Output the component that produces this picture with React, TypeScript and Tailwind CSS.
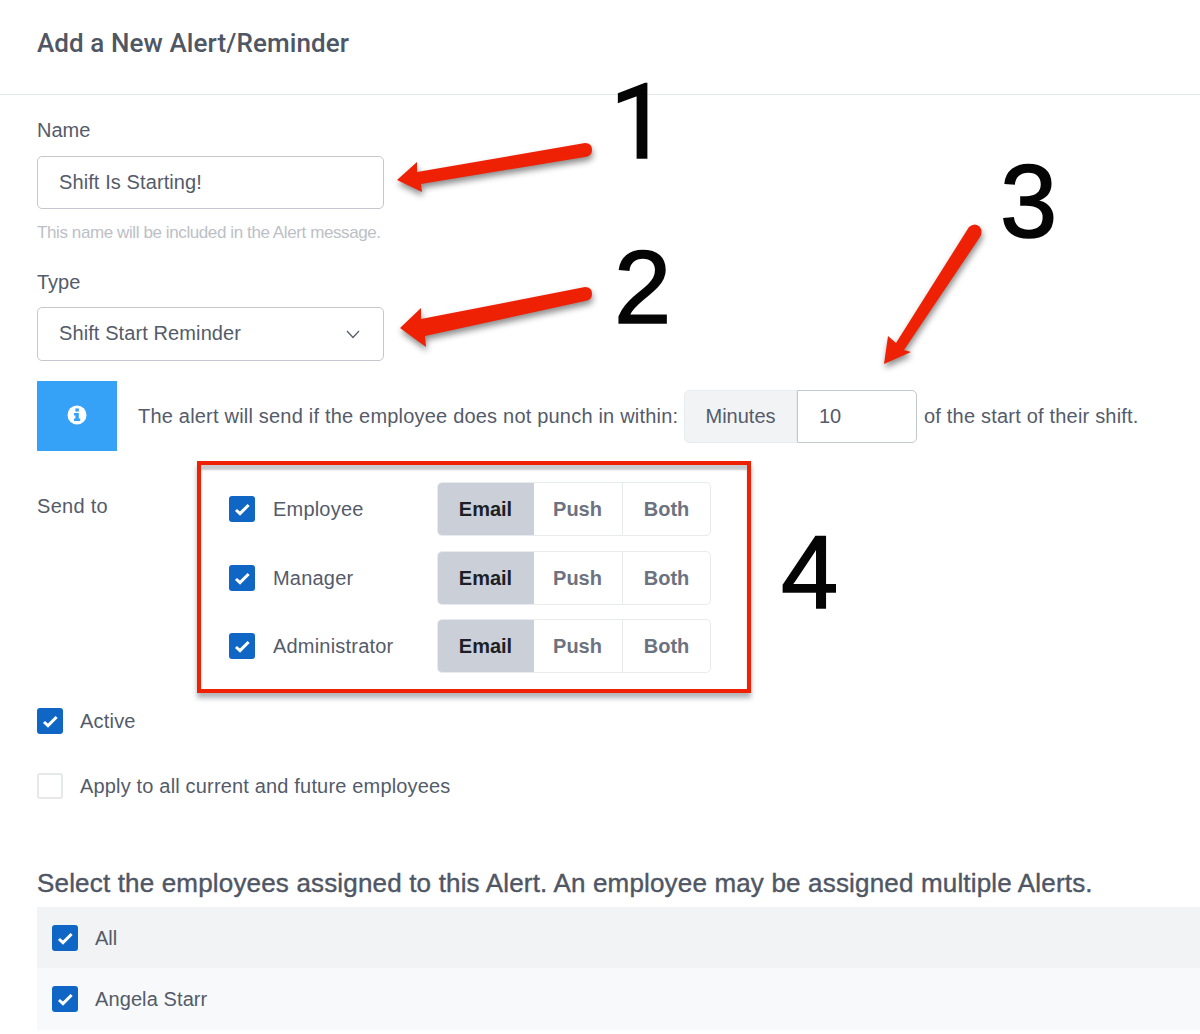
const sans = '"Liberation Sans", Arial, sans-serif';

function Check({ on = true }: { on?: boolean }) {
  if (!on) {
    return <span className="block h-[26px] w-[26px] shrink-0 rounded-[3px] border-2 border-[#e6e8eb] bg-white" />;
  }
  return (
    <span className="block h-[26px] w-[26px] shrink-0 rounded-[3px] bg-[#0f66c4]">
      <svg width="26" height="26" viewBox="0 0 26 26">
        <path d="M7 14 L11 17.6 L19.6 9" fill="none" stroke="#fff" strokeWidth="3" />
      </svg>
    </span>
  );
}

function Segments() {
  return (
    <div className="flex h-[54px] w-[274px] overflow-hidden rounded-[5px] border border-[#e8ebee] text-[20px] font-bold">
      <div className="-m-px flex w-[97px] items-center justify-center bg-[#cbcfd8] text-[#1c1f26]">Email</div>
      <div className="flex w-[90px] items-center justify-center border-r border-[#e8ebee] text-[#6d7280]">Push</div>
      <div className="flex flex-1 items-center justify-center text-[#6d7280]">Both</div>
    </div>
  );
}

function SendRow({ label, className }: { label: string; className?: string }) {
  return (
    <div className={`flex items-center ${className ?? ''}`}>
      <Check />
      <span className="ml-[18px] w-[164px] text-[20px] tracking-[0.2px] text-[#545b6a]">{label}</span>
      <Segments />
    </div>
  );
}

function Annotations() {
  const digit = 'absolute text-[103px] leading-[118px] text-[#050505] [-webkit-text-stroke:1.5px_#050505]';
  return (
    <>
      <svg className="pointer-events-none absolute left-0 top-0 drop-shadow-[1px_4px_3px_rgba(0,0,0,0.45)]" width="1200" height="1034">
        <path d="M585 143 Q592 143 592 150 Q592 156 585 157 L421 184 L422 192 L397 180 L417 162 L417 172 Z" fill="#ee2105" />
        <path d="M585 287 Q592 287 592 294 Q592 300 585 301 L425 336 L426 347 L400 328 L421 308 L421 319 Z" fill="#ee2105" />
        <path d="M969 227 Q975 222 980 227 Q983 232 980 237 L904 350 L911 352 L884 364 L888 336 L896 343 Z" fill="#ee2105" />
      </svg>
      <span className={`${digit} left-[610px] top-[64px]`} style={{ fontFamily: 'Roboto, sans-serif' }}>1</span>
      <span className={`${digit} left-[614px] top-[229px]`}>2</span>
      <span className={`${digit} left-[1000px] top-[143px]`}>3</span>
      <span className={`${digit} left-[781px] top-[514px]`}>4</span>
    </>
  );
}

export default function App() {
  return (
    <div className="relative h-[1034px] w-[1200px] overflow-hidden bg-white text-[#545b6a]" style={{ fontFamily: sans }}>
      <div className="flex h-[95px] items-center border-b border-[#e6e9ec] pb-[7px] pl-[37px]">
        <h1 className="text-[26px] font-medium tracking-[0.09px] text-[#4f5664]" style={{ fontFamily: 'Roboto, sans-serif' }}>
          Add a New Alert/Reminder
        </h1>
      </div>

      <div className="pl-[37px]">
        <label className="mt-[23px] block text-[20px] leading-[24px]">Name</label>
        <div className="mt-[14px] flex h-[53px] w-[347px] items-center rounded-[5px] border border-[#c4c7ce] pb-[2px] pl-[21px] text-[20px] tracking-[0.1px]">
          Shift Is Starting!
        </div>
        <p className="mt-[14px] text-[17px] leading-[20px] tracking-[-0.4px] text-[#bcc0c6]">This name will be included in the Alert message.</p>

        <label className="mt-[27px] block text-[20px] leading-[24px]">Type</label>
        <div className="mt-[13px] flex h-[54px] w-[347px] items-center justify-between rounded-[5px] border border-[#c4c7ce] pl-[21px] pr-[23px] text-[20px] tracking-[0.1px]">
          <span className="pb-[2px]">Shift Start Reminder</span>
          <svg width="14" height="9" viewBox="0 0 14 9">
            <path d="M1 1 L7 7.5 L13 1" fill="none" stroke="#545b6a" strokeWidth="1.2" />
          </svg>
        </div>

        <div className="mt-[20px] flex items-start">
          <div className="flex h-[70px] w-[80px] shrink-0 items-center justify-center bg-[#36a2f7] pb-[2px]">
            <svg width="20" height="20" viewBox="0 0 20 20">
              <circle cx="10" cy="10" r="9.5" fill="#fff" />
              <rect x="8.4" y="3.4" width="3.4" height="3.2" fill="#36a2f7" />
              <path d="M7 8 H11.8 V13.6 H13.2 V16 H7 V13.6 H8.4 V10.4 H7 Z" fill="#36a2f7" />
            </svg>
          </div>
          <div className="mt-[9px] flex items-center">
            <span className="ml-[21px] w-[546px] pb-[2px] text-[20px] tracking-[0.2px]">The alert will send if the employee does not punch in within:</span>
            <div className="flex h-[53px] w-[113px] items-center justify-center rounded-l-[5px] border border-[#e9ecef] bg-[#f1f3f5] pb-[2px] text-[20px]">
              Minutes
            </div>
            <div className="flex h-[53px] w-[120px] items-center rounded-r-[5px] border border-[#c4c7ce] pb-[2px] pl-[21px] text-[20px]">10</div>
            <span className="ml-[7px] pb-[2px] text-[20px] tracking-[0.2px]">of the start of their shift.</span>
          </div>
        </div>

        <div className="mt-[10px] flex items-start">
          <span className="mt-[33px] w-[160px] text-[20px] leading-[24px] tracking-[0.3px]">Send to</span>
          <div className="h-[232px] w-[554px] border-[4px] border-[#ee2105] pl-[28px] pt-[17px] shadow-[0_5px_5px_rgba(60,65,80,0.4),inset_0_5px_2px_rgba(60,65,80,0.28)]">
            <SendRow label="Employee" />
            <SendRow label="Manager" className="mt-[15px]" />
            <SendRow label="Administrator" className="mt-[14px]" />
          </div>
        </div>

        <div className="mt-[13px] flex items-center">
          <Check />
          <span className="ml-[17px] text-[20px] tracking-[0.2px]">Active</span>
        </div>
        <div className="mt-[35px] flex items-center">
          <Check on={false} />
          <span className="ml-[17px] text-[20px] tracking-[0.17px]">Apply to all current and future employees</span>
        </div>

        <h2 className="mt-[67px] text-[26px] leading-[30px] tracking-[0.17px] text-[#4f5664] [-webkit-text-stroke:0.4px_#4f5664]">
          Select the employees assigned to this Alert. An employee may be assigned multiple Alerts.
        </h2>
        <div className="mt-[9px]">
          <div className="flex h-[61px] items-center bg-[#f1f3f5] pl-[15px]">
            <Check />
            <span className="ml-[17px] text-[20px]">All</span>
          </div>
          <div className="flex h-[62px] items-center bg-[#f8f9fa] pl-[15px]">
            <Check />
            <span className="ml-[17px] text-[20px] tracking-[0.1px]">Angela Starr</span>
          </div>
        </div>
      </div>

      <Annotations />
    </div>
  );
}
